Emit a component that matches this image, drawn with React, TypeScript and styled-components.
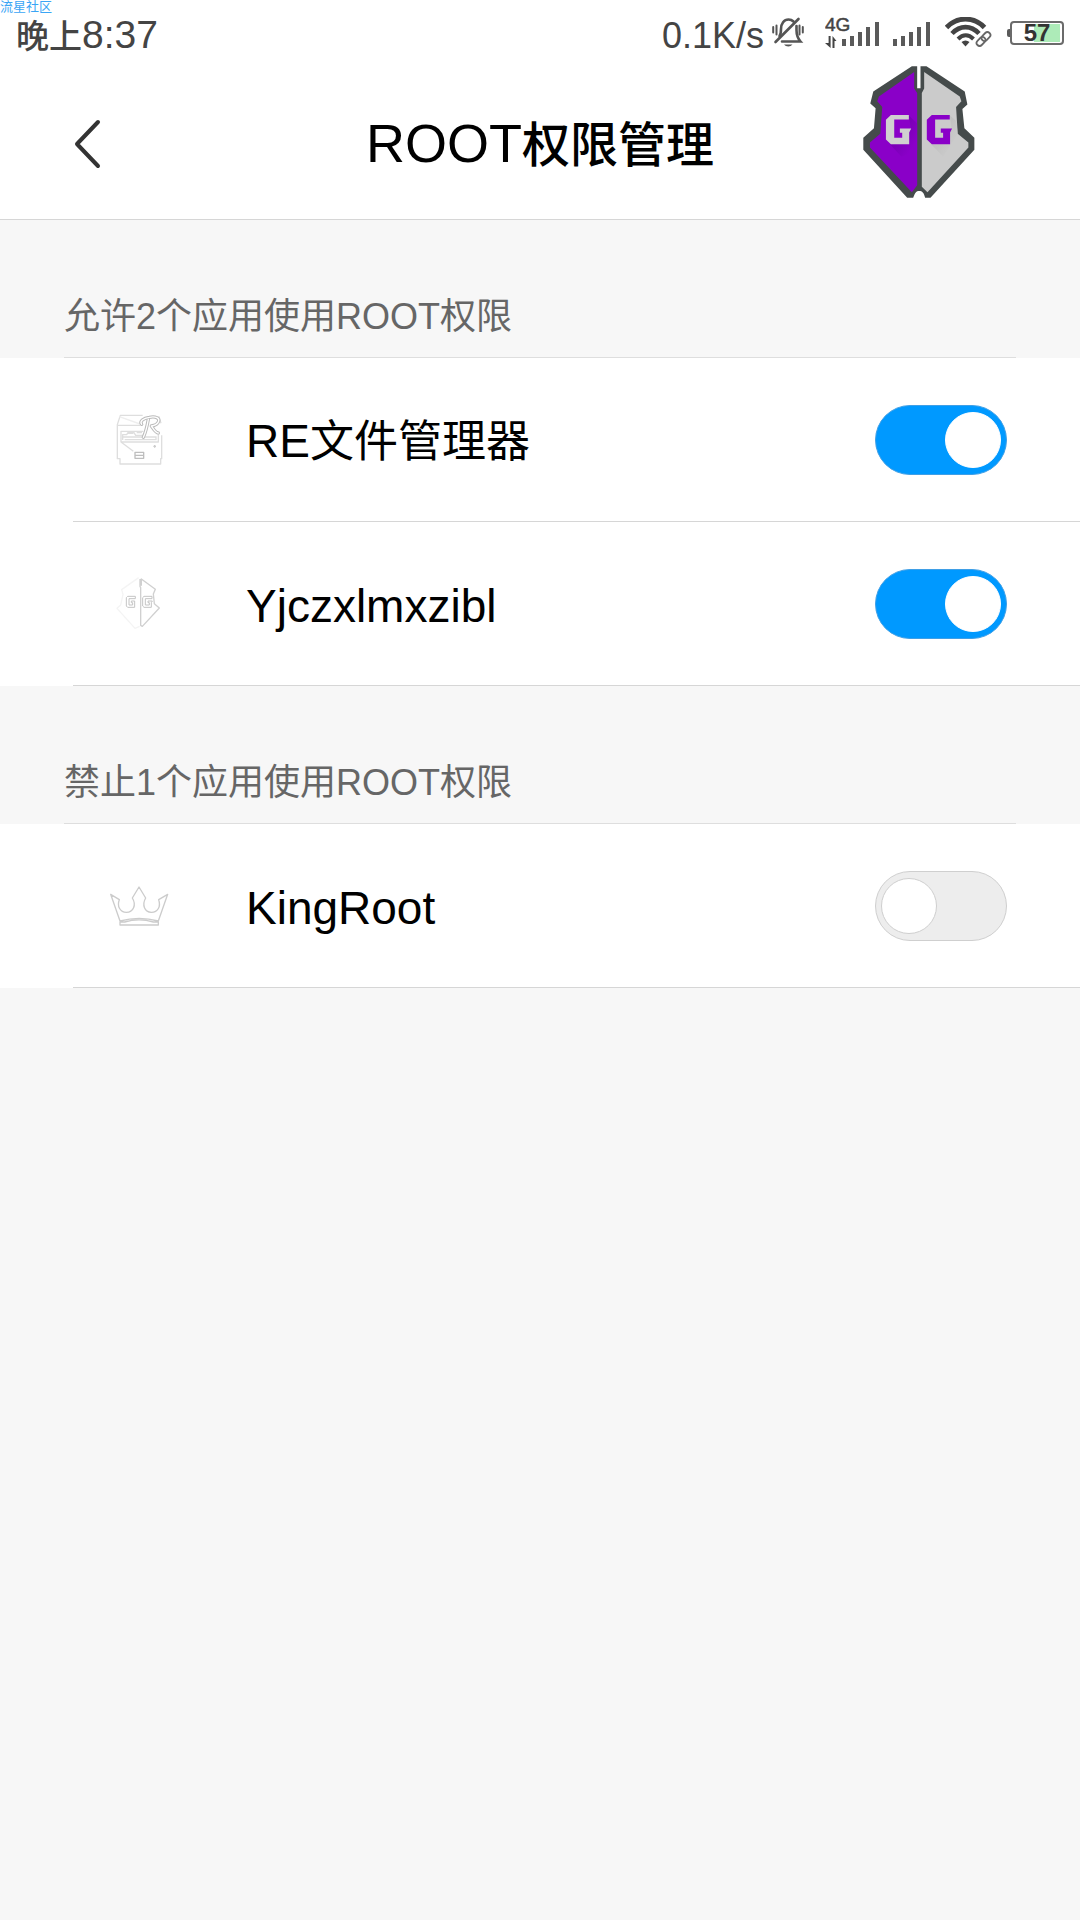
import React from 'react';
import type { ReactNode } from 'react';
import styled, { createGlobalStyle } from 'styled-components';

const GlobalStyle = createGlobalStyle`
  *, *::before { box-sizing: border-box; }
  body {
    margin: 0;
    min-height: 100vh;
    background: #f7f7f7;
    color: #000;
    font-family: 'Liberation Sans', 'Noto Sans CJK SC', sans-serif;
  }
  svg { display: block; flex: none; }
`;

const Top = styled.div`
  background: #fff;
  border-bottom: 1px solid #d6d6d6;
`;

const StatusBar = styled.div`
  position: relative;
  height: 64px;
  padding: 8px 16px 0;
  display: flex;
  align-items: center;
  justify-content: space-between;
  color: #444;
  line-height: 56px;
`;

const Watermark = styled.span`
  position: absolute;
  left: 0;
  top: 0;
  font-size: 13px;
  line-height: 13px;
  color: #3aa5f5;
`;

const Clock = styled.time`
  font-size: 39px;
`;

const Cjk = styled.span<{ $size: number; $weight?: number }>`
  font-size: ${(p) => p.$size}px;
  font-weight: ${(p) => p.$weight ?? 400};
`;

const Indicators = styled.div`
  height: 56px;
  display: flex;
  align-items: center;
`;

const Speed = styled.span`
  margin-right: 8px;
  font-size: 36px;
`;

const Signals = styled.div`
  margin: 0 15px 12px 21px;
  display: flex;
  align-items: flex-end;
  gap: 6px;
`;

const Glyph = styled.div`
  margin-bottom: 8px;
`;

const Battery = styled.div`
  margin: 0 0 7px 15px;
  display: flex;
  align-items: center;
  &::before {
    content: '';
    width: 3px;
    height: 8px;
    border-radius: 2px 0 0 2px;
    background: #5a5a5a;
  }
`;

const BatteryBody = styled.div`
  width: 54px;
  height: 24px;
  border: 2px solid #6b6b6b;
  border-radius: 4px;
  background: linear-gradient(#adebb8, #adebb8) 22px 50% / 26px 18px no-repeat;
  color: #333;
  font-size: 24px;
  line-height: 20px;
  font-weight: 700;
  text-align: center;
`;

const Header = styled.header`
  position: relative;
  height: 155px;
  padding: 5px 73px 0;
  display: grid;
  grid-template-columns: 60px 1fr 60px;
  align-items: center;
`;

const BackButton = styled.button`
  padding: 0;
  border: 0;
  background: none;
  height: 80px;
  display: flex;
  align-items: center;
`;

const Title = styled.h1`
  margin: 0;
  text-align: center;
  font-size: 54px;
  line-height: 64px;
  font-weight: 400;
`;

const FloatingLogo = styled.div`
  position: absolute;
  right: 105px;
  top: 2px;
`;

const SectionTitle = styled.h2`
  margin: 0 64px;
  height: 138px;
  padding-top: 73px;
  border-bottom: 1px solid #dedede;
  color: #666;
  font-size: 36px;
  line-height: 48px;
  font-weight: 400;
`;

const List = styled.ul`
  margin: 0;
  padding: 0;
  list-style: none;
  background: #fff;
`;

const Row = styled.li`
  height: 164px;
  margin-left: 73px;
  padding: 0 73px 0 36px;
  display: flex;
  align-items: center;
  border-bottom: 1px solid #d6d6d6;
`;

const AppName = styled.label`
  flex: 1;
  padding: 4px 0 0 77px;
  font-size: 46px;
  line-height: 60px;
`;

const Toggle = styled.input`
  appearance: none;
  flex: none;
  margin: 0;
  width: 132px;
  height: 70px;
  padding: 5px;
  display: flex;
  align-items: center;
  border: 1px solid #cfcfcf;
  border-radius: 35px;
  background: #ededed;
  &::before {
    content: '';
    width: 56px;
    height: 56px;
    border-radius: 50%;
    border: 1px solid #cfcfcf;
    background: #fff;
  }
  &:checked {
    justify-content: flex-end;
    background: #0099ff;
    border-color: #3f9fe6;
  }
  &:checked::before { border-color: #fff; }
`;

const BackIcon = () => (
  <svg width="28" height="50" viewBox="0 0 28 50" fill="none" stroke="#333" strokeWidth="4" strokeLinecap="round" strokeLinejoin="round">
    <path d="M25 3 4 25 25 47" />
  </svg>
);

const MutedBell = () => (
  <svg width="32" height="30" viewBox="0 0 32 30" fill="none" stroke="#555" strokeWidth="2.6" strokeLinecap="round">
    <path d="M7.500 19c1.500-2 1.500-4 1.500-7 0-5.500 3-9.500 7.500-9.500 2 0 3.500.5 5 2M24.500 9v4c0 5 .5 7.500 4 11.500H10" />
    <path d="M3.500 25 26.500 2" />
    <path d="M12 27.500c2 2.500 6.500 2.500 8.500 0z" fill="#555" stroke="none" />
    <path d="M1.200 10v5.500M4.500 8.500v9M27.500 8.500v9M30.800 10v5.500" strokeWidth="2" />
  </svg>
);

const bars = (x: number) => (
  <path
    fill="#5a5a5a"
    d={[[0, 7], [8, 10], [16, 14], [24, 19], [33, 24]].map(([dx, h]) => `M${x + dx} ${28 - h}h4v${h}h-4z`).join('')}
  />
);

const DataSignal = () => (
  <svg width="62" height="36" viewBox="0 -6 62 36">
    <text x="0" y="13" fontSize="19" fill="#444" stroke="#444" strokeWidth="0.5">4G</text>
    <path d="M0 25h3.600V18h2v12zM7.500 30V18l4 5h-2v7z" fill="#444" />
    {bars(17)}
  </svg>
);

const Signal = () => (
  <svg width="37" height="30" viewBox="0 0 37 30">{bars(0)}</svg>
);

const Wifi = () => (
  <svg width="47" height="30" viewBox="0 0 47 30" fill="none" stroke="#444">
    <path d="M1.500 10.500C12-.8 29-.8 39.500 10.500" strokeWidth="4.800" />
    <path d="M7 16.500c8-8.500 19-8.500 27 0" strokeWidth="4.600" />
    <path d="M13 22c5-5 10.500-5 15.500 0" strokeWidth="4" />
    <path d="M20.500 29.500 16.500 25c2.500-2 5.500-2 8 0z" fill="#444" stroke="none" />
    <g transform="rotate(-45 38.500 22)" stroke="#666" strokeWidth="1.800">
      <rect x="30" y="19" width="10" height="6" rx="3" />
      <rect x="37" y="19" width="10" height="6" rx="3" />
    </g>
  </svg>
);

const GuardianLogo = () => (
  <svg width="112" height="132" viewBox="70 47 335 397">
    <defs>
      <linearGradient id="purpleShade" x1="0" y1="0" x2="1" y2="1">
        <stop offset="0.200" stopColor="#6500a0" />
        <stop offset="0.800" stopColor="#8a00c8" />
      </linearGradient>
      <linearGradient id="greyShade" x1="0" y1="0" x2="1" y2="1">
        <stop offset="0.200" stopColor="#adadad" />
        <stop offset="0.800" stopColor="#cbcbcb" />
      </linearGradient>
    </defs>
    <path fill="#454b4b" d="M216 48H232V114H242V48H260L375 124 383 163 368 176 374 234 404 263V299L272 443H256C252 428 247 423 238 423S226 428 220 443H202L70 299V263L102 234 107 174 91 160 100 124Z" />
    <path fill="#8a00c8" d="M223 65V115L232 128V406L216 427 90 292V277L121 251 127 170 112 153 117 139Z" />
    <path fill="#cbcbcb" d="M253 65 360 139 365 153 349 170 354 251 386 277V292L263 427 246 410V128L253 115Z" />
    <path fill="url(#purpleShade)" d="M207 196 232 220V300L185 320 150 282 195 281 213 236Z" opacity=".7" />
    <path fill="url(#greyShade)" d="M330 195 350 213 354 251 310 320 275 283 320 281 335 236Z" opacity=".5" />
    <path fill="#d0d0d0" d="M207 194V208H163V263H187V248H180V235H214L208 247V282H153L138 268V209L153 194Z" />
    <path fill="#8a00c8" d="M330 194V208H286V263H310V248H303V235H337L331 247V282H276L261 268V209L276 194Z" />
  </svg>
);

const IconFrame = ({ children }: { children: ReactNode }) => (
  <svg width="60" height="60" viewBox="57 60 180 180" fill="none" stroke="#cccccc" strokeWidth="4" strokeLinejoin="round" aria-hidden="true">
    {children}
  </svg>
);

const FileManagerIcon = () => (
  <IconFrame>
    <g stroke="#dedede">
      <path d="M158 76H91L82 104V206H90V222H212V206H215V136M206 79 213 100M82 106H150" />
      <path d="M88 80 150 102" stroke="#eeeeee" />
      <path d="M93 156V124H160M205 134V156H93L130 184" />
      <path d="M98 150V134H110L114 128H132L137 136H160M100 141H200M104 149H198V140" />
      <path d="M112 130H130M140 128H156" />
    </g>
    <path d="M135 187H161V205H135ZM135 196H161" stroke="#bebebe" />
    <path d="M190 169H198M194 165V173" />
    <path d="M155 103C148 95 160 84 178 82 198 78 209 85 206 94 203 103 193 107 184 108 190 116 196 129 205 129M175 88C172 105 168 125 160 142" stroke="#bbb" strokeWidth="10" strokeLinecap="round" />
    <path d="M155 103C148 95 160 84 178 82 198 78 209 85 206 94 203 103 193 107 184 108 190 116 196 129 205 129M175 88C172 105 168 125 160 142" stroke="#fff" strokeWidth="4" strokeLinecap="round" />
  </IconFrame>
);

const GuardianIcon = () => (
  <IconFrame>
    <g transform="translate(0 3)">
      <path d="M146 68 95 104 99 118 92 150 81 160 135 220 149 214" stroke="#f4f4f4" />
      <path d="M150 72V94L152 98V211L157 214 208 159 193 146 190 117 196 103 154 72V92" stroke="#d0d0d0" />
      <path d="M136 124H113L109 128V153L113 157H134V138H124V143H128V150H117V131H136ZM186 124H162L158 128V153L162 157H184V143L187 138H174V143H178V150H166V131H186Z" stroke="#c4c4c4" strokeWidth="3" />
    </g>
  </IconFrame>
);

const CrownIcon = () => (
  <IconFrame>
    <g transform="translate(0 11)">
      <path d="M90 184 62 104 88 120C80 140 91 158 109 158 130 158 140 136 127 115L147 82 167 115C155 136 164 158 184 158 204 158 213 140 206 120L233 104 205 184Q147 168 90 184ZM90 187H104Q147 174 190 187H205V196H90Z" />
    </g>
  </IconFrame>
);

interface AppRowProps {
  id: string;
  icon: ReactNode;
  name: ReactNode;
  allowed?: boolean;
}

const AppRow = ({ id, icon, name, allowed }: AppRowProps) => (
  <Row>
    {icon}
    <AppName htmlFor={id}>{name}</AppName>
    <Toggle id={id} type="checkbox" defaultChecked={allowed} />
  </Row>
);

export default function App() {
  return (
    <>
      <GlobalStyle />
      <Top>
        <StatusBar>
          <Watermark>流星社区</Watermark>
          <Clock><Cjk $size={33} $weight={500}>晚上</Cjk>8:37</Clock>
          <Indicators>
            <Speed>0.1K/s</Speed>
            <Glyph><MutedBell /></Glyph>
            <Signals>
              <DataSignal />
              <Signal />
            </Signals>
            <Glyph><Wifi /></Glyph>
            <Battery><BatteryBody>57</BatteryBody></Battery>
          </Indicators>
        </StatusBar>
        <Header>
          <BackButton aria-label="返回"><BackIcon /></BackButton>
          <Title>ROOT<Cjk $size={48} $weight={500}>权限管理</Cjk></Title>
          <FloatingLogo><GuardianLogo /></FloatingLogo>
        </Header>
      </Top>
      <main>
        <section>
          <SectionTitle>允许2个应用使用ROOT权限</SectionTitle>
          <List>
            <AppRow id="re" icon={<FileManagerIcon />} name={<>RE<Cjk $size={44}>文件管理器</Cjk></>} allowed />
            <AppRow id="guardian" icon={<GuardianIcon />} name="Yjczxlmxzibl" allowed />
          </List>
        </section>
        <section>
          <SectionTitle>禁止1个应用使用ROOT权限</SectionTitle>
          <List>
            <AppRow id="kingroot" icon={<CrownIcon />} name="KingRoot" />
          </List>
        </section>
      </main>
    </>
  );
}
